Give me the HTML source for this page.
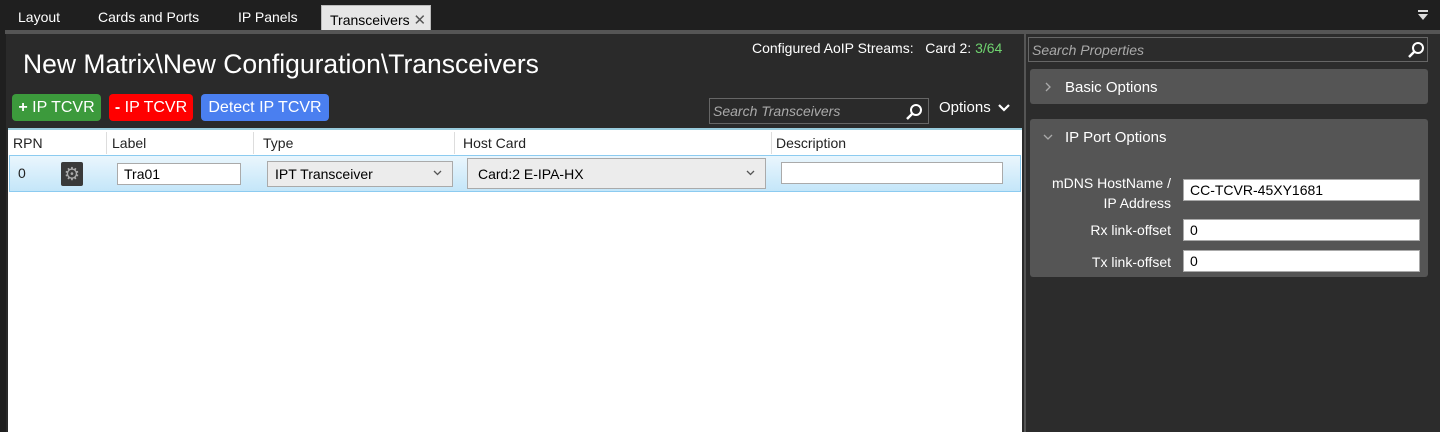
<!DOCTYPE html>
<html><head><style>
*{box-sizing:border-box;margin:0;padding:0}
body{width:1440px;height:432px;overflow:hidden;background:#1f1f1f;font-family:"Liberation Sans",sans-serif;font-size:14px;color:#fff;position:relative}
.a{position:absolute}
.tab{position:absolute;top:9px;font-size:14px;color:#fff}
.btn{position:absolute;top:94px;height:27px;border-radius:4px;font-size:16px;color:#fff;line-height:27px;text-align:center}
.inp{position:absolute;background:#fff;border:1px solid #aaa;color:#000;font-size:14px;padding-left:6px;line-height:20px}
.lbl{position:absolute;right:269px;font-size:14px;color:#fff;text-align:right}
.chev{position:absolute;right:10px;top:50%;margin-top:-4px}
</style></head><body>
<div class="tab" style="left:18px">Layout</div>
<div class="tab" style="left:98px">Cards and Ports</div>
<div class="tab" style="left:238px">IP Panels</div>
<div class="a" style="left:321px;top:5px;width:110px;height:27px;background:#e6e6e6;border:1px solid #bbb;border-bottom:none;color:#000;font-size:14px;padding:5px 0 0 8px">Transceivers <span style="font-size:15px;color:#555">✕</span></div>
<div class="a" style="left:1418px;top:10px;width:10px;height:2px;background:#ddd"></div>
<div class="a" style="left:1418px;top:14px;width:0;height:0;border-left:5px solid transparent;border-right:5px solid transparent;border-top:6px solid #ddd"></div>
<div class="a" style="left:5px;top:30px;width:1435px;height:4px;background:#555"></div>
<div class="a" style="left:6px;top:34px;width:1018px;height:398px;background:#2a2a2a"></div>
<div class="a" style="left:1024px;top:34px;width:2px;height:398px;background:#555"></div>
<div class="a" style="left:1026px;top:34px;width:414px;height:398px;background:#2c2c2c"></div>
<div class="a" style="left:752px;top:40px;font-size:14px">Configured AoIP Streams:&nbsp;&nbsp; Card 2: <span style="color:#6fd36f">3/64</span></div>
<div class="a" style="left:23px;top:49px;font-size:26.5px">New Matrix\New Configuration\Transceivers</div>
<div class="btn" style="left:12px;width:89px;background:#3c9a3c"><b>+</b> IP TCVR</div>
<div class="btn" style="left:109px;width:84px;background:#f00"><b>-</b> IP TCVR</div>
<div class="btn" style="left:201px;width:128px;background:#4a7ff0">Detect IP TCVR</div>
<div class="a" style="left:709px;top:98px;width:220px;height:26px;border:1px solid #666;background:#2a2a2a;color:#aaa;font-style:italic;padding:4px 0 0 3px">Search Transceivers</div>
<svg class="a" style="left:905px;top:103px" width="18" height="18"><circle cx="11" cy="7" r="5" stroke="#fff" stroke-width="2" fill="none"/><line x1="7" y1="11" x2="2" y2="16" stroke="#fff" stroke-width="2.5"/></svg>
<div class="a" style="left:939px;top:99px;font-size:15px">Options</div>
<svg class="a" style="left:997px;top:103px" width="14" height="10"><path d="M2 2 L7 7 L12 2" stroke="#fff" stroke-width="2.2" fill="none"/></svg>
<div class="a" style="left:8px;top:128px;width:1014px;height:304px;background:#fff;border-top:2px solid #9cd"></div>
<div class="a" style="left:8px;top:130px;width:1014px;height:24px;color:#222">
<span class="a" style="left:5px;top:5px">RPN</span>
<span class="a" style="left:98px;top:2px;width:1px;height:22px;background:#ddd"></span><span class="a" style="left:104px;top:5px">Label</span>
<span class="a" style="left:245px;top:2px;width:1px;height:22px;background:#ddd"></span><span class="a" style="left:255px;top:5px">Type</span>
<span class="a" style="left:446px;top:2px;width:1px;height:22px;background:#ddd"></span><span class="a" style="left:455px;top:5px">Host Card</span>
<span class="a" style="left:763px;top:2px;width:1px;height:22px;background:#ddd"></span><span class="a" style="left:768px;top:5px">Description</span>
</div>
<div class="a" style="left:9px;top:155px;width:1012px;height:37px;background:linear-gradient(#eaf6fd,#c4e6f9);border:1px solid #8ccbf0"></div>
<div class="a" style="left:18px;top:165px;color:#222">0</div>
<div class="a" style="left:61px;top:162px;width:22px;height:24px;background:#3a3a3a;border-radius:2px;color:#aaa;font-size:18px;text-align:center;line-height:24px">⚙</div>
<div class="inp" style="left:117px;top:163px;width:124px;height:22px">Tra01</div>
<div class="inp" style="left:267px;top:161px;width:186px;height:26px;background:#ececec;padding-left:7px;line-height:24px">IPT Transceiver<svg class="chev" width="9" height="6"><path d="M1 1L4.5 4.5L8 1" stroke="#555" stroke-width="1.3" fill="none"/></svg></div>
<div class="inp" style="left:467px;top:158px;width:299px;height:31px;background:#ececec;padding-left:10px;line-height:30px">Card:2 E-IPA-HX<svg class="chev" width="9" height="6"><path d="M1 1L4.5 4.5L8 1" stroke="#555" stroke-width="1.3" fill="none"/></svg></div>
<div class="inp" style="left:781px;top:162px;width:222px;height:22px"></div>
<div class="a" style="left:1028px;top:37px;width:400px;height:25px;border:1px solid #666;color:#aaa;font-style:italic;padding:4px 0 0 3px">Search Properties</div>
<svg class="a" style="left:1407px;top:41px" width="18" height="18"><circle cx="11" cy="7" r="5" stroke="#fff" stroke-width="2" fill="none"/><line x1="7" y1="11" x2="2" y2="16" stroke="#fff" stroke-width="2.5"/></svg>
<div class="a" style="left:1030px;top:69px;width:398px;height:35px;background:#555;border-radius:3px"></div>
<svg class="a" style="left:1045px;top:82px" width="6" height="10"><path d="M1 1L5 5L1 9" stroke="#aaa" stroke-width="1.3" fill="none"/></svg>
<div class="a" style="left:1065px;top:79px;font-size:15px">Basic Options</div>
<div class="a" style="left:1030px;top:119px;width:398px;height:158px;background:#555;border-radius:3px"></div>
<svg class="a" style="left:1043px;top:134px" width="10" height="6"><path d="M1 1L5 5L9 1" stroke="#aaa" stroke-width="1.3" fill="none"/></svg>
<div class="a" style="left:1065px;top:129px;font-size:15px">IP Port Options</div>
<div class="lbl" style="top:173px;line-height:20px">mDNS HostName /<br>IP Address</div>
<div class="inp" style="left:1183px;top:179px;width:237px;height:22px">CC-TCVR-45XY1681</div>
<div class="lbl" style="top:222px">Rx link-offset</div>
<div class="inp" style="left:1183px;top:219px;width:237px;height:22px">0</div>
<div class="lbl" style="top:254px">Tx link-offset</div>
<div class="inp" style="left:1183px;top:250px;width:237px;height:22px">0</div>
</body></html>
